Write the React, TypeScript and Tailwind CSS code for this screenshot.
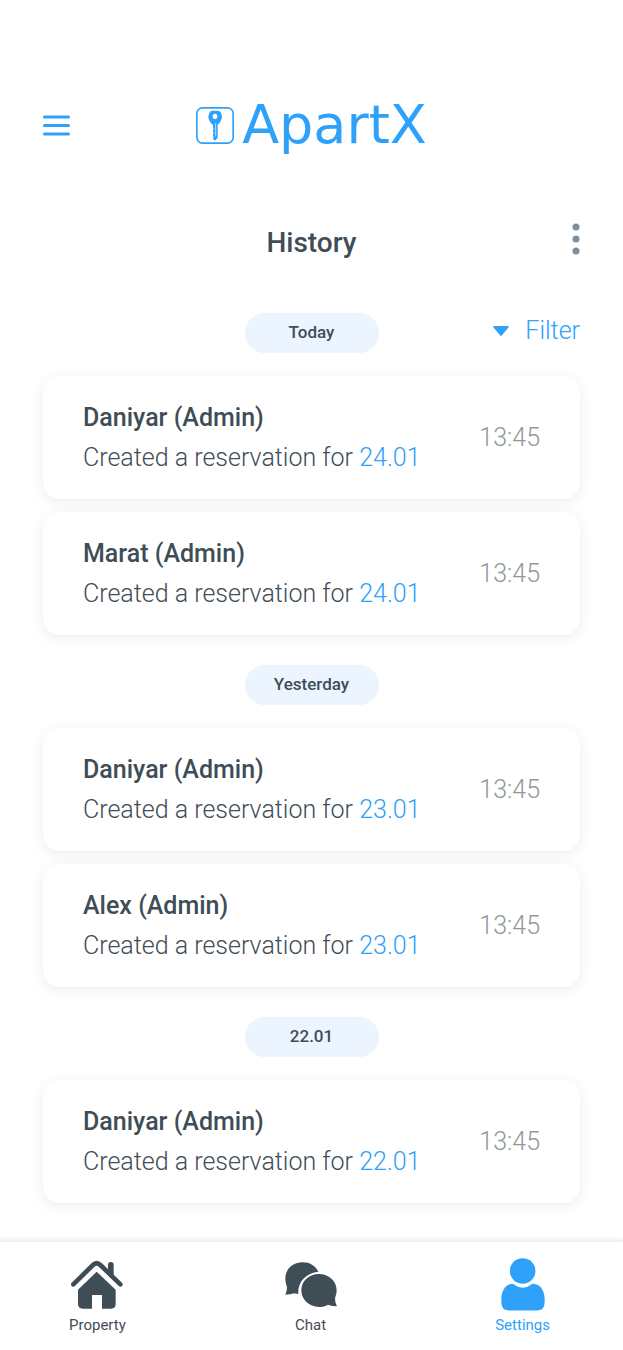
import React from "react";

type Entry = { name: string; date: string; time: string };
type Group = { label: string; entries: Entry[] };

const groups: Group[] = [
  {
    label: "Today",
    entries: [
      { name: "Daniyar (Admin)", date: "24.01", time: "13:45" },
      { name: "Marat (Admin)", date: "24.01", time: "13:45" },
    ],
  },
  {
    label: "Yesterday",
    entries: [
      { name: "Daniyar (Admin)", date: "23.01", time: "13:45" },
      { name: "Alex (Admin)", date: "23.01", time: "13:45" },
    ],
  },
  {
    label: "22.01",
    entries: [{ name: "Daniyar (Admin)", date: "22.01", time: "13:45" }],
  },
];

function KeyBadge() {
  return (
    <svg className="h-[37px] w-[38px]" viewBox="0 0 114 111" aria-hidden="true">
      <rect x="2.5" y="2.5" width="109" height="106" rx="17" fill="none" stroke="#2ea1fb" strokeWidth="5" />
      <path
        fill="#2ea1fb"
        fillRule="evenodd"
        d="M48 11h17q6 0 9 5l3 8q2 6 0 11l-4 9q-3 6-8 9v40l-8 8-6-6V53q-6-3-9-9l-4-9q-2-5 0-11l3-8q2-5 7-5ZM57 20a7 8 0 1 0 0 16a7 8 0 1 0 0-16Z"
      />
      <path d="M59 48v40M50 64l5 3M50 76l5 3M50 88l5 3" stroke="#fff" strokeWidth="2" fill="none" />
    </svg>
  );
}

function HouseIcon() {
  return (
    <svg className="h-[49px] w-[52px]" viewBox="94 90 156 147" fill="currentColor" aria-hidden="true">
      <path d="M101 163L160 105Q171 94 182 105L242 163" fill="none" stroke="currentColor" strokeWidth="14" strokeLinecap="round" strokeLinejoin="round" />
      <path d="M205 104a8.500 8 0 0 1 17 0v34l-17-17Z" />
      <path d="M171 125L228 179V222Q228 236 214 236H187V195H157V236H130Q115 236 115 222V179Z" />
    </svg>
  );
}

function ChatIcon() {
  return (
    <svg className="h-[45px] w-[52px]" viewBox="102 92 156 135" fill="currentColor" aria-hidden="true">
      <path d="M202 121C193 103 176 93 155 93C125 93 103 114 103 141C103 154 107 163 108 168Q108 178 103 190Q118 190 130 186L142 188C139 153 164 125 202 121Z" />
      <path d="M204 128C233 128 257 149 257 177C257 188 253 195 252 202Q252 213 258 225Q242 225 231 220C223 225 214 227 204 227C174 227 151 205 151 177C151 149 174 128 204 128Z" />
    </svg>
  );
}

function PersonIcon() {
  return (
    <svg className="h-[53px] w-[44px]" viewBox="122 84 131 157" fill="currentColor" aria-hidden="true">
      <circle cx="186.500" cy="122" r="38" />
      <path d="M151 161Q157 159 162 163Q187 182 211 163Q216 159 223 161C242 164 252 184 252 207V216Q252 240 228 240H147Q123 240 123 216V207C123 184 133 164 151 161Z" />
    </svg>
  );
}

const tabs = [
  { label: "Property", icon: <HouseIcon />, active: false },
  { label: "Chat", icon: <ChatIcon />, active: false },
  { label: "Settings", icon: <PersonIcon />, active: true },
];

function EntryCard({ name, date, time }: Entry) {
  return (
    <li className="flex h-[123px] items-center justify-between rounded-[17px] bg-white px-10 shadow-[0_3px_13px_rgba(60,76,86,0.1)]">
      <div className="text-[25px] leading-10">
        <h3 className="font-medium">{name}</h3>
        <p className="font-light">
          Created a reservation for <a href="#reservation" className="text-[#2ea1fb]">{date}</a>
        </p>
      </div>
      <time className="text-[25px] font-light text-[#8f979c]">{time}</time>
    </li>
  );
}

export default function App() {
  return (
    <div className="flex min-h-screen flex-col bg-white font-['Roboto','Liberation_Sans',sans-serif] text-[#3f4d57]">
      <header className="grid grid-cols-[1fr_auto_1fr] items-center px-[43px] pt-[94px]">
        <button type="button" aria-label="Open menu" className="flex h-8 w-[27px] items-center">
          <svg className="h-[21px] w-[27px]" viewBox="0 0 27 21" aria-hidden="true">
            <path d="M1.500 2h24M1.500 10.500h24M1.500 19h24" stroke="#2ea1fb" strokeWidth="3" strokeLinecap="round" />
          </svg>
        </button>
        <a href="#home" className="flex items-center gap-2 text-[#2ea1fb]">
          <KeyBadge />
          <span className="font-['DejaVu_Sans',sans-serif] text-[54px] leading-[62px]">ApartX</span>
        </a>
      </header>

      <main className="px-[43px] pb-[39px]">
        <div className="mt-[67px] grid grid-cols-[1fr_auto_1fr] items-center">
          <h1 className="col-start-2 text-[28px] leading-10 font-medium">History</h1>
          <button type="button" aria-label="More options" className="flex h-10 w-2 justify-self-end">
            <svg className="h-8 w-2" viewBox="0 0 8 32" fill="#80909b" aria-hidden="true">
              <circle cx="4" cy="4" r="3.500" />
              <circle cx="4" cy="16" r="3.500" />
              <circle cx="4" cy="28" r="3.500" />
            </svg>
          </button>
        </div>

        <div className="mt-[50px] flex flex-col gap-[30px]">
          {groups.map((group, i) => (
            <section key={group.label}>
              <div className="mb-[23px] grid grid-cols-[1fr_134px_1fr] items-center">
                <h2 className="col-start-2 flex h-10 items-center justify-center rounded-full bg-[#ebf4ff] text-[17px] font-medium">
                  {group.label}
                </h2>
                {i === 0 && (
                  <button type="button" className="flex items-center gap-4 justify-self-end pb-1 text-[25px] leading-9 font-light text-[#2ea1fb]">
                    <svg className="h-[10px] w-4" viewBox="0 0 16 10" fill="currentColor" aria-hidden="true">
                      <path d="M1.500 0h13q2 0 1 1.500L9 9.200q-1 1-2 0L.5 1.500Q-.5 0 1.500 0Z" />
                    </svg>
                    Filter
                  </button>
                )}
              </div>
              <ul className="flex flex-col gap-[13px]">
                {group.entries.map((entry) => (
                  <EntryCard key={entry.name} {...entry} />
                ))}
              </ul>
            </section>
          ))}
        </div>
      </main>

      <nav aria-label="Main" className="mt-auto flex h-[108px] justify-between bg-white pt-4 pr-[73px] pl-[69px] shadow-[0_0_7px_rgba(0,0,0,0.16)]">
        {tabs.map((tab) => (
          <a
            key={tab.label}
            href={"#" + tab.label.toLowerCase()}
            aria-current={tab.active ? "page" : undefined}
            className={tab.active ? "flex flex-col items-center text-[#2ea1fb]" : "flex flex-col items-center"}
          >
            <span className="flex h-[53px] items-center">{tab.icon}</span>
            <span className="mt-1 text-[15px] leading-5">{tab.label}</span>
          </a>
        ))}
      </nav>
    </div>
  );
}
